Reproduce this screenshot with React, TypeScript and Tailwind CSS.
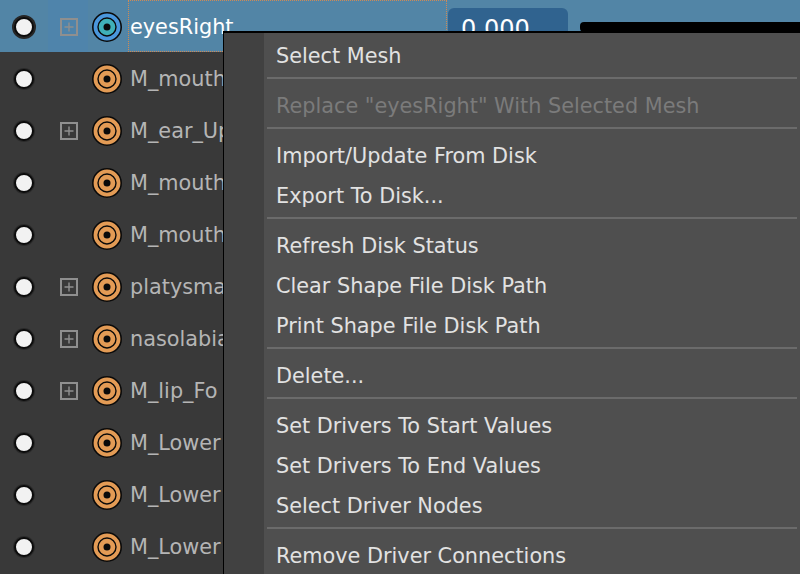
const rows: { name: string; plus: boolean; sel?: boolean }[] = [
  { name: "eyesRight", plus: true, sel: true },
  { name: "M_mouth", plus: false },
  { name: "M_ear_Up", plus: true },
  { name: "M_mouth", plus: false },
  { name: "M_mouth", plus: false },
  { name: "platysma", plus: true },
  { name: "nasolabial", plus: true },
  { name: "M_lip_Fo", plus: true },
  { name: "M_Lower", plus: false },
  { name: "M_Lower", plus: false },
  { name: "M_Lower", plus: false },
];

const menu: (string | null | { t: string; off: boolean })[] = [
  "Select Mesh",
  null,
  { t: 'Replace "eyesRight" With Selected Mesh', off: true },
  null,
  "Import/Update From Disk",
  "Export To Disk...",
  null,
  "Refresh Disk Status",
  "Clear Shape File Disk Path",
  "Print Shape File Disk Path",
  null,
  "Delete...",
  null,
  "Set Drivers To Start Values",
  "Set Drivers To End Values",
  "Select Driver Nodes",
  null,
  "Remove Driver Connections",
];

function Target({ sel }: { sel?: boolean }) {
  const c = sel ? "#4a97dc" : "#e39b55";
  return (
    <svg width="32" height="32" viewBox="0 0 32 32" className="shrink-0">
      <circle cx="16" cy="16" r="14.2" fill={c} stroke="#0a0a0a" strokeWidth="1.6" />
      <circle cx="16" cy="16" r="9" fill={sel ? "#3fb0b8" : "#e39b55"} stroke="#0a0a0a" strokeWidth="1.4" />
      <circle cx="16" cy="16" r="3.5" fill="#0a0a0a" />
    </svg>
  );
}

function Plus() {
  return (
    <svg width="18" height="20" viewBox="0 0 18 20">
      <rect x="1" y="2" width="16" height="16" fill="none" stroke="#8f8f8f" strokeWidth="2" />
      <path d="M9 5.5v9M4.5 10h9" stroke="#8f8f8f" strokeWidth="1.4" />
    </svg>
  );
}

export default function App() {
  return (
    <div
      className="relative w-[800px] h-[574px] overflow-hidden bg-[#393939]"
      style={{ fontFamily: '"DejaVu Sans", sans-serif' }}
    >
      {rows.map((r, i) => (
        <div
          key={i}
          className={`flex items-center h-[52px] pt-[2px] ${r.sel ? "bg-[#5285a6]" : ""}`}
        >
          <div className="w-[48px] flex justify-center shrink-0">
            <div
              className={`w-[20px] h-[20px] rounded-full bg-[#f2f2f2] border-[2px] border-[#0c0c0c] ${
                r.sel ? "shadow-[0_0_0_2px_#262626]" : "shadow-[0_0_0_1px_#2a2a2a]"
              }`}
            />
          </div>
          <div
            className={`w-[40px] h-[52px] -mt-[2px] pt-[2px] pl-[12px] flex items-center shrink-0 ${
              r.sel ? "bg-[#4f84ab]" : ""
            }`}
          >
            {r.plus && <Plus />}
          </div>
          <div className="ml-[3px] flex shrink-0">
            <Target sel={r.sel} />
          </div>
          <div
            className={`ml-[5px] flex items-center text-[20.8px] ${
              r.sel
                ? "w-[320px] h-[52px] -mt-[2px] text-white border border-dotted border-[#d08a55] pl-[1px] pt-[3px]"
                : "text-[#b5b5b5] pl-[2px] pt-[2px]"
            }`}
          >
            {r.name}
          </div>
          {r.sel && (
            <div className="ml-[1px] flex items-center">
              <div className="w-[120px] h-[38px] rounded-[6px] bg-[#30638f] text-white text-[24px] pl-[13px] pt-[3px] flex items-center">
                0.000
              </div>
              <div className="ml-[12px] w-[220px] h-[10px] rounded-l-[4px] bg-black" />
            </div>
          )}
        </div>
      ))}

      <div className="absolute left-[223px] top-[31px] w-[577px] h-[543px] flex border-t-2 border-l border-black bg-[#4f4f4f] text-[20.8px] text-[#e2e2e2]">
        <div className="w-[40px] shrink-0 bg-[#414141]" />
        <div className="flex-1 pt-[4px] flex flex-col">
          {menu.map((m, i) =>
            m === null ? (
              <div key={i} className="h-[10px] shrink-0 pl-[3px] pr-[3px]">
                <div className="h-[2px] w-full bg-[#6b6b6b]" />
              </div>
            ) : typeof m === "string" ? (
              <div key={i} className="h-[40px] flex items-center pl-[12px] shrink-0">
                {m}
              </div>
            ) : (
              <div key={i} className="h-[40px] flex items-center pl-[12px] shrink-0 text-[#7b7b7b]">
                {m.t}
              </div>
            )
          )}
        </div>
      </div>
    </div>
  );
}
